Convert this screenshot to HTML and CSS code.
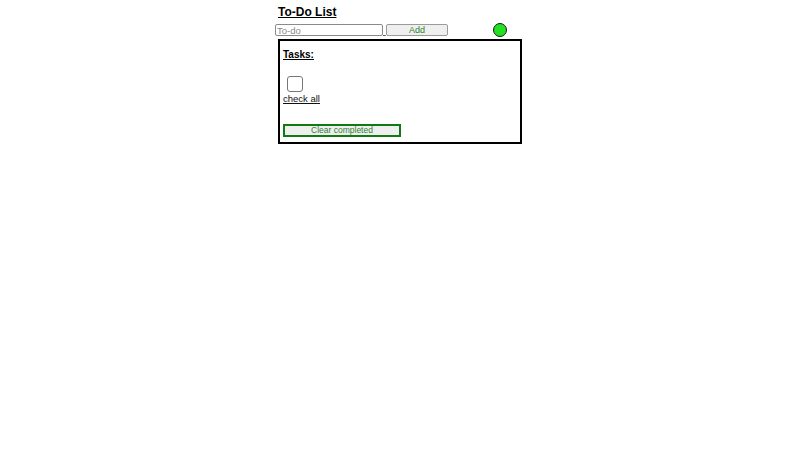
FILE: index.html
```html
<!DOCTYPE html>
<html>
<head>
<meta charset="utf-8">
<title>To-Do List</title>
<link rel="stylesheet" href="styles.css">
</head>
<body>
<div class="app">
  <h1 class="title">To-Do List</h1>
  <div class="row">
    <input class="todo-input" type="text" placeholder="To-do">
    <span class="sep">&nbsp;</span>
    <button class="add-btn">Add</button>
    <span class="dot"></span>
  </div>
  <div class="panel">
    <h2 class="tasks">Tasks:</h2>
    <input class="check" type="checkbox">
    <span class="check-all">check all</span>
    <button class="clear-btn">Clear completed</button>
  </div>
</div>
</body>
</html>
```
FILE: styles.css
```css
html, body {
  margin: 0;
  padding: 0;
  background: #ffffff;
  font-family: "Liberation Sans", Arial, sans-serif;
  color: #000;
}

.app {
  width: 250px;
  margin: 0 auto;
}

.title {
  margin: 0 0 5px 0;
  padding: 5px 0 0 3px;
  font-size: 12px;
  line-height: 14px;
  font-weight: bold;
  text-decoration: underline;
}

.row {
  display: flex;
  align-items: center;
  height: 12px;
}

.todo-input {
  box-sizing: border-box;
  width: 108px;
  height: 12px;
  margin: 0;
  padding: 0 1px;
  border: 1px solid #8a8a8a;
  border-radius: 2px;
  font-family: "Liberation Sans", Arial, sans-serif;
  font-size: 9.5px;
  line-height: 10px;
  color: #222;
}

.todo-input::placeholder {
  color: #8a8a8a;
}

.sep {
  align-self: flex-end;
  font-size: 10px;
  line-height: 10px;
  width: 3px;
  overflow: hidden;
  text-decoration: underline;
  color: #555;
}

.add-btn {
  box-sizing: border-box;
  width: 62px;
  height: 12px;
  margin: 0;
  padding: 0;
  border: 1px solid #9a9a9a;
  border-radius: 2px;
  background: #efefef;
  color: #2f7f2f;
  font-family: "Liberation Sans", Arial, sans-serif;
  font-size: 9px;
  line-height: 10px;
}

.dot {
  box-sizing: border-box;
  width: 14px;
  height: 14px;
  margin-left: auto;
  margin-right: 18px;
  border: 1px solid #1a1a1a;
  border-radius: 50%;
  background: #22e022;
}

.panel {
  margin: 3px 3px 0 3px;
  padding: 8px 3px 5px 3px;
  border: 2px solid #000;
}

.tasks {
  margin: 0;
  padding-left: 0;
  font-size: 10px;
  line-height: 12px;
  font-weight: bold;
  text-decoration: underline;
}

.check {
  display: block;
  appearance: none;
  -webkit-appearance: none;
  box-sizing: border-box;
  width: 16px;
  height: 16px;
  margin: 15px 0 0 4px;
  border: 1px solid #777;
  border-radius: 3px;
  background: #fff;
}

.check-all {
  display: block;
  margin-top: 2px;
  font-size: 9.5px;
  line-height: 10px;
  font-weight: normal;
  text-decoration: underline;
  color: #111;
}

.clear-btn {
  display: block;
  box-sizing: border-box;
  width: 118px;
  height: 13px;
  margin: 20px 0 0 0;
  padding: 0;
  border: 2px solid #107a10;
  border-radius: 0;
  background: #efefef;
  color: #2f7f2f;
  font-family: "Liberation Sans", Arial, sans-serif;
  font-size: 8.5px;
  line-height: 9px;
}
```
